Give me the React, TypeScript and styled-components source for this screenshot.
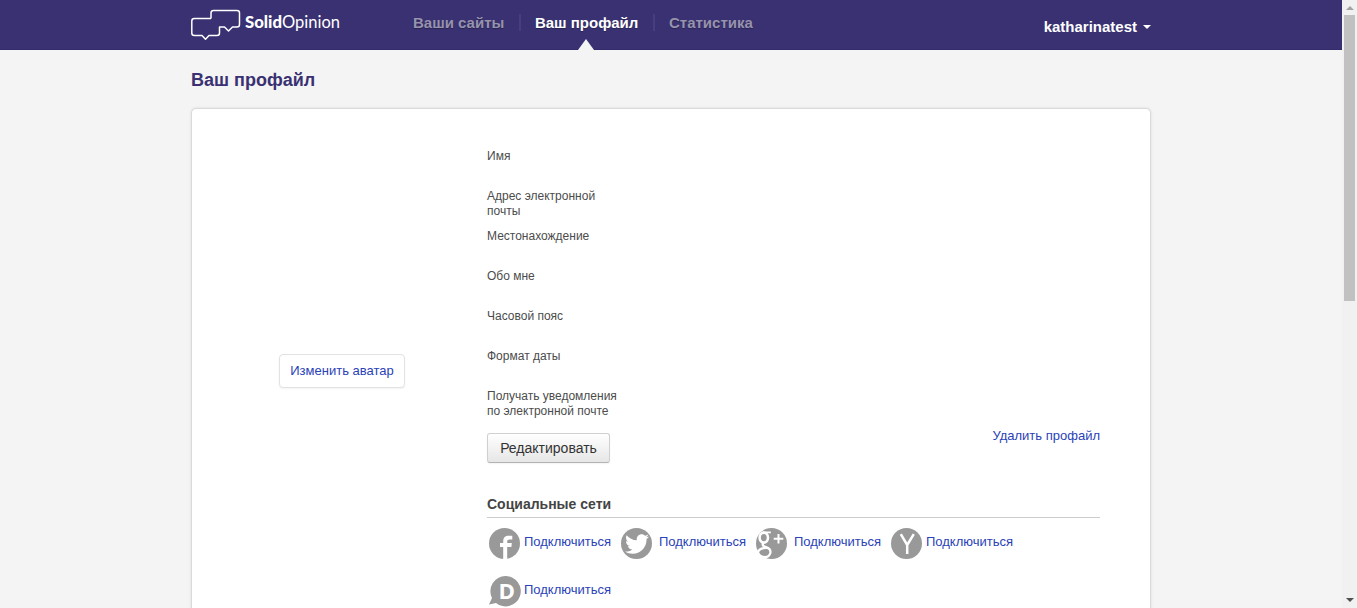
import React from "react";
import styled, { createGlobalStyle, css } from "styled-components";
import { FaTwitter } from "react-icons/fa";

const GlobalStyle = createGlobalStyle`
  * { box-sizing: border-box; }
  body {
    margin: 0;
    background: #f4f4f4;
    font-family: Arial, "Liberation Sans", sans-serif;
    color: #444;
    overflow: hidden;
  }
`;

const Screen = styled.div`
  display: flex;
  height: 608px;
  overflow: hidden;
`;
const Page = styled.div`
  flex: 1;
  min-width: 0;
`;
const Header = styled.header`
  height: 50px;
  background: #393172;
  border-bottom: 1px solid #332b6b;
`;
const Container = styled.div`
  width: 960px;
  margin: 0 auto;
`;
const HeaderRow = styled(Container)`
  display: flex;
  height: 50px;
`;
const Logo = styled.a`
  width: 208px;
  height: 50px;
  svg { display: block; }
`;
const Nav = styled.nav`
  display: flex;
  height: 50px;
  padding-top: 14px;
`;
const NavItem = styled.a<{ $active?: boolean }>`
  position: relative;
  height: 36px;
  padding: 0 15px 0 13.6px;
  font-size: 15px;
  font-weight: bold;
  line-height: 18px;
  color: ${(p) => (p.$active ? "#fff" : "#9793ad")};
  text-shadow: 0 1px 1px rgba(0, 0, 0, 0.3);
  &:first-child { padding-left: 14px; }
  ${(p) =>
    p.$active &&
    css`
      &::after {
        content: "";
        position: absolute;
        left: 50%;
        bottom: 0;
        margin-left: -9.6px;
        border: 8px solid transparent;
        border-top: 0;
        border-bottom: 11px solid #f4f4f4;
      }
    `}
`;
const NavDivider = styled.span`
  width: 2px;
  height: 17px;
  background: #453e80;
`;
const UserMenu = styled.a`
  display: flex;
  align-items: center;
  gap: 6px;
  height: 18px;
  margin: 17px 0 0 auto;
  font-size: 15px;
  font-weight: bold;
  color: #fff;
`;
const Caret = styled.span`
  margin-top: 1px;
  border: 4px solid transparent;
  border-top-color: #fff;
  border-bottom: 0;
`;
const Title = styled.h1`
  margin: 0;
  padding-top: 19px;
  height: 58px;
  font-size: 18px;
  line-height: 22px;
  color: #393172;
`;
const Card = styled.main`
  display: flex;
  height: 620px;
  padding-top: 40px;
  background: #fff;
  border: 1px solid #dadada;
  border-radius: 5px;
  box-shadow: 0 0 3px rgba(0, 0, 0, 0.1);
`;
const AvatarColumn = styled.aside`
  width: 295px;
  padding: 205px 0 0 87px;
`;
const AvatarButton = styled.button`
  width: 126px;
  height: 34px;
  padding: 0 0 1px;
  background: #fff;
  border: 1px solid #e2e2e2;
  border-radius: 4px;
  box-shadow: 0 1px 2px rgba(0, 0, 0, 0.05);
  font: 13px Arial, "Liberation Sans", sans-serif;
  color: #2a42b8;
`;
const Details = styled.section`
  width: 613px;
`;
const Field = styled.div`
  height: 40px;
`;
const FieldLabel = styled.div`
  width: 135px;
  font-size: 12px;
  line-height: 15px;
  color: #4c4c4c;
`;
const Actions = styled.div`
  display: flex;
  justify-content: space-between;
  height: 30px;
  margin-top: 4px;
`;
const EditButton = styled.button`
  width: 123px;
  height: 30px;
  padding: 0;
  background: linear-gradient(#fff, #e6e6e6);
  border: 1px solid #d0d0d0;
  border-bottom-color: #b3b3b3;
  border-radius: 3px;
  box-shadow: 0 1px 2px rgba(0, 0, 0, 0.05);
  font: 14px Arial, "Liberation Sans", sans-serif;
  color: #333;
`;
const TextLink = styled.a`
  font-size: 13px;
  line-height: 20px;
  color: #2a42b8;
`;
const DeleteLink = styled(TextLink)`
  margin-top: -7px;
`;
const SectionTitle = styled.h2`
  margin: 31px 0 0;
  height: 24px;
  border-bottom: 1px solid #ccc;
  font-size: 14px;
  line-height: 20px;
`;
const Networks = styled.div`
  display: grid;
  grid-template-columns: repeat(4, 135px);
  grid-auto-rows: 48px;
  padding-top: 10px;
  margin-left: -1px;
`;
const Network = styled.div<{ $inset: number; $gap: number }>`
  display: flex;
  gap: ${(p) => p.$gap}px;
  padding-left: ${(p) => p.$inset}px;
  ${TextLink} { margin-top: 4px; }
`;
const Badge = styled.svg`
  display: block;
  flex: none;
`;
const Scrollbar = styled.div`
  display: flex;
  flex-direction: column;
  align-items: center;
  justify-content: space-between;
  width: 15px;
  padding: 6px 0;
  background: #f1f1f1;
`;
const Thumb = styled.div`
  width: 11px;
  height: 286px;
  margin: 5px 0 auto 0;
  background: #c1c1c1;
`;
const ScrollArrow = styled.span<{ $down?: boolean }>`
  border: 4px solid transparent;
  ${(p) =>
    p.$down
      ? "border-top-color: #505050; border-bottom: 0;"
      : "border-bottom-color: #a3a3a3; border-top: 0;"}
`;

const fields = [
  "Имя",
  "Адрес электронной почты",
  "Местонахождение",
  "Обо мне",
  "Часовой пояс",
  "Формат даты",
  "Получать уведомления по электронной почте",
];

const Disc = () => <circle cx="15.5" cy="15.5" r="15.5" fill="#999" />;

const networks = [
  {
    id: "facebook", inset: 3, gap: 4, width: 31,
    art: (
      <>
        <Disc />
        <path d="M14.200 31V19H11V15H14.200V13.500C14.200 9.300 16.500 7.700 19.500 7.700H23.300V11.500H21C19 11.500 18.200 12.200 18.200 13.600V15H22.800L22.400 19H18.200V31Z" fill="#fff" />
      </>
    ),
  },
  {
    id: "twitter", inset: 0, gap: 7, width: 31,
    art: (
      <>
        <Disc />
        <FaTwitter x="4" y="4" size={24} color="#fff" />
      </>
    ),
  },
  {
    id: "google", inset: 0, gap: 7, width: 31,
    art: (
      <>
        <Disc />
        <g fill="none" stroke="#fff">
          <ellipse cx="7.800" cy="9.600" rx="4.200" ry="5" strokeWidth="2.600" />
          <path d="M7 4.400H14.800" strokeWidth="1.800" />
          <path d="M7.500 14.500C5.500 17 7.500 18.300 10 19.200C13.500 20.400 15 22 14.300 25C13.500 28 11 29.500 7.500 29C3.500 28.500 1 26 2.500 23C4 20.500 8 19.800 11 19.900" strokeWidth="2.300" />
          <path d="M17.700 10.700H27.300M22.500 5.900V15.500" strokeWidth="2" />
        </g>
      </>
    ),
  },
  {
    id: "yahoo", inset: 0, gap: 4, width: 31,
    art: (
      <>
        <Disc />
        <path d="M9.800 6.200L16.200 17L22.800 6.200M16.200 16.500V26" fill="none" stroke="#fff" strokeWidth="2.500" />
      </>
    ),
  },
  {
    id: "disqus", inset: 3, gap: 3, width: 32,
    art: (
      <>
        <path d="M16.500 0A15.200 15.200 0 1 1 7 27L0 28.500L3 22A15.200 15.200 0 0 1 16.500 0Z" fill="#999" />
        <text x="9.600" y="22.600" fontFamily="Open Sans" fontWeight="700" fontSize="21" textLength="16.500" lengthAdjust="spacingAndGlyphs" fill="#fff">D</text>
      </>
    ),
  },
];

export default function App() {
  return (
    <>
      <GlobalStyle />
      <Screen>
        <Page>
          <Header>
            <HeaderRow>
              <Logo>
                <svg width="160" height="50">
                  <path
                    d="M20 18.500V13Q20 10.500 22.500 10.500H46Q48.500 10.500 48.500 13V24.500Q48.500 27 46 27H41.500L37.500 31L33.500 27H28.500V33Q28.500 35.500 26 35.500H18L14.500 39.200L11 35.500H3.300Q.8 35.500 .8 33V21Q.8 18.500 3.300 18.500H20"
                    fill="none" stroke="#fff" strokeWidth="1.500" strokeLinejoin="round"
                  />
                  <text x="54" y="28" fontFamily="Lato" fontSize="16.500" fill="#fff">
                    <tspan fontWeight="900" textLength="37" lengthAdjust="spacingAndGlyphs">Solid</tspan>
                    <tspan fontWeight="400">Opinion</tspan>
                  </text>
                </svg>
              </Logo>
              <Nav>
                <NavItem>Ваши сайты</NavItem>
                <NavDivider />
                <NavItem $active>Ваш профайл</NavItem>
                <NavDivider />
                <NavItem>Статистика</NavItem>
              </Nav>
              <UserMenu>katharinatest<Caret /></UserMenu>
            </HeaderRow>
          </Header>
          <Container>
            <Title>Ваш профайл</Title>
            <Card>
              <AvatarColumn>
                <AvatarButton>Изменить аватар</AvatarButton>
              </AvatarColumn>
              <Details>
                {fields.map((label) => (
                  <Field key={label}><FieldLabel>{label}</FieldLabel></Field>
                ))}
                <Actions>
                  <EditButton>Редактировать</EditButton>
                  <DeleteLink>Удалить профайл</DeleteLink>
                </Actions>
                <SectionTitle>Социальные сети</SectionTitle>
                <Networks>
                  {networks.map((n) => (
                    <Network key={n.id} $inset={n.inset} $gap={n.gap}>
                      <Badge width={n.width} height="31">{n.art}</Badge>
                      <TextLink>Подключиться</TextLink>
                    </Network>
                  ))}
                </Networks>
              </Details>
            </Card>
          </Container>
        </Page>
        <Scrollbar>
          <ScrollArrow />
          <Thumb />
          <ScrollArrow $down />
        </Scrollbar>
      </Screen>
    </>
  );
}
